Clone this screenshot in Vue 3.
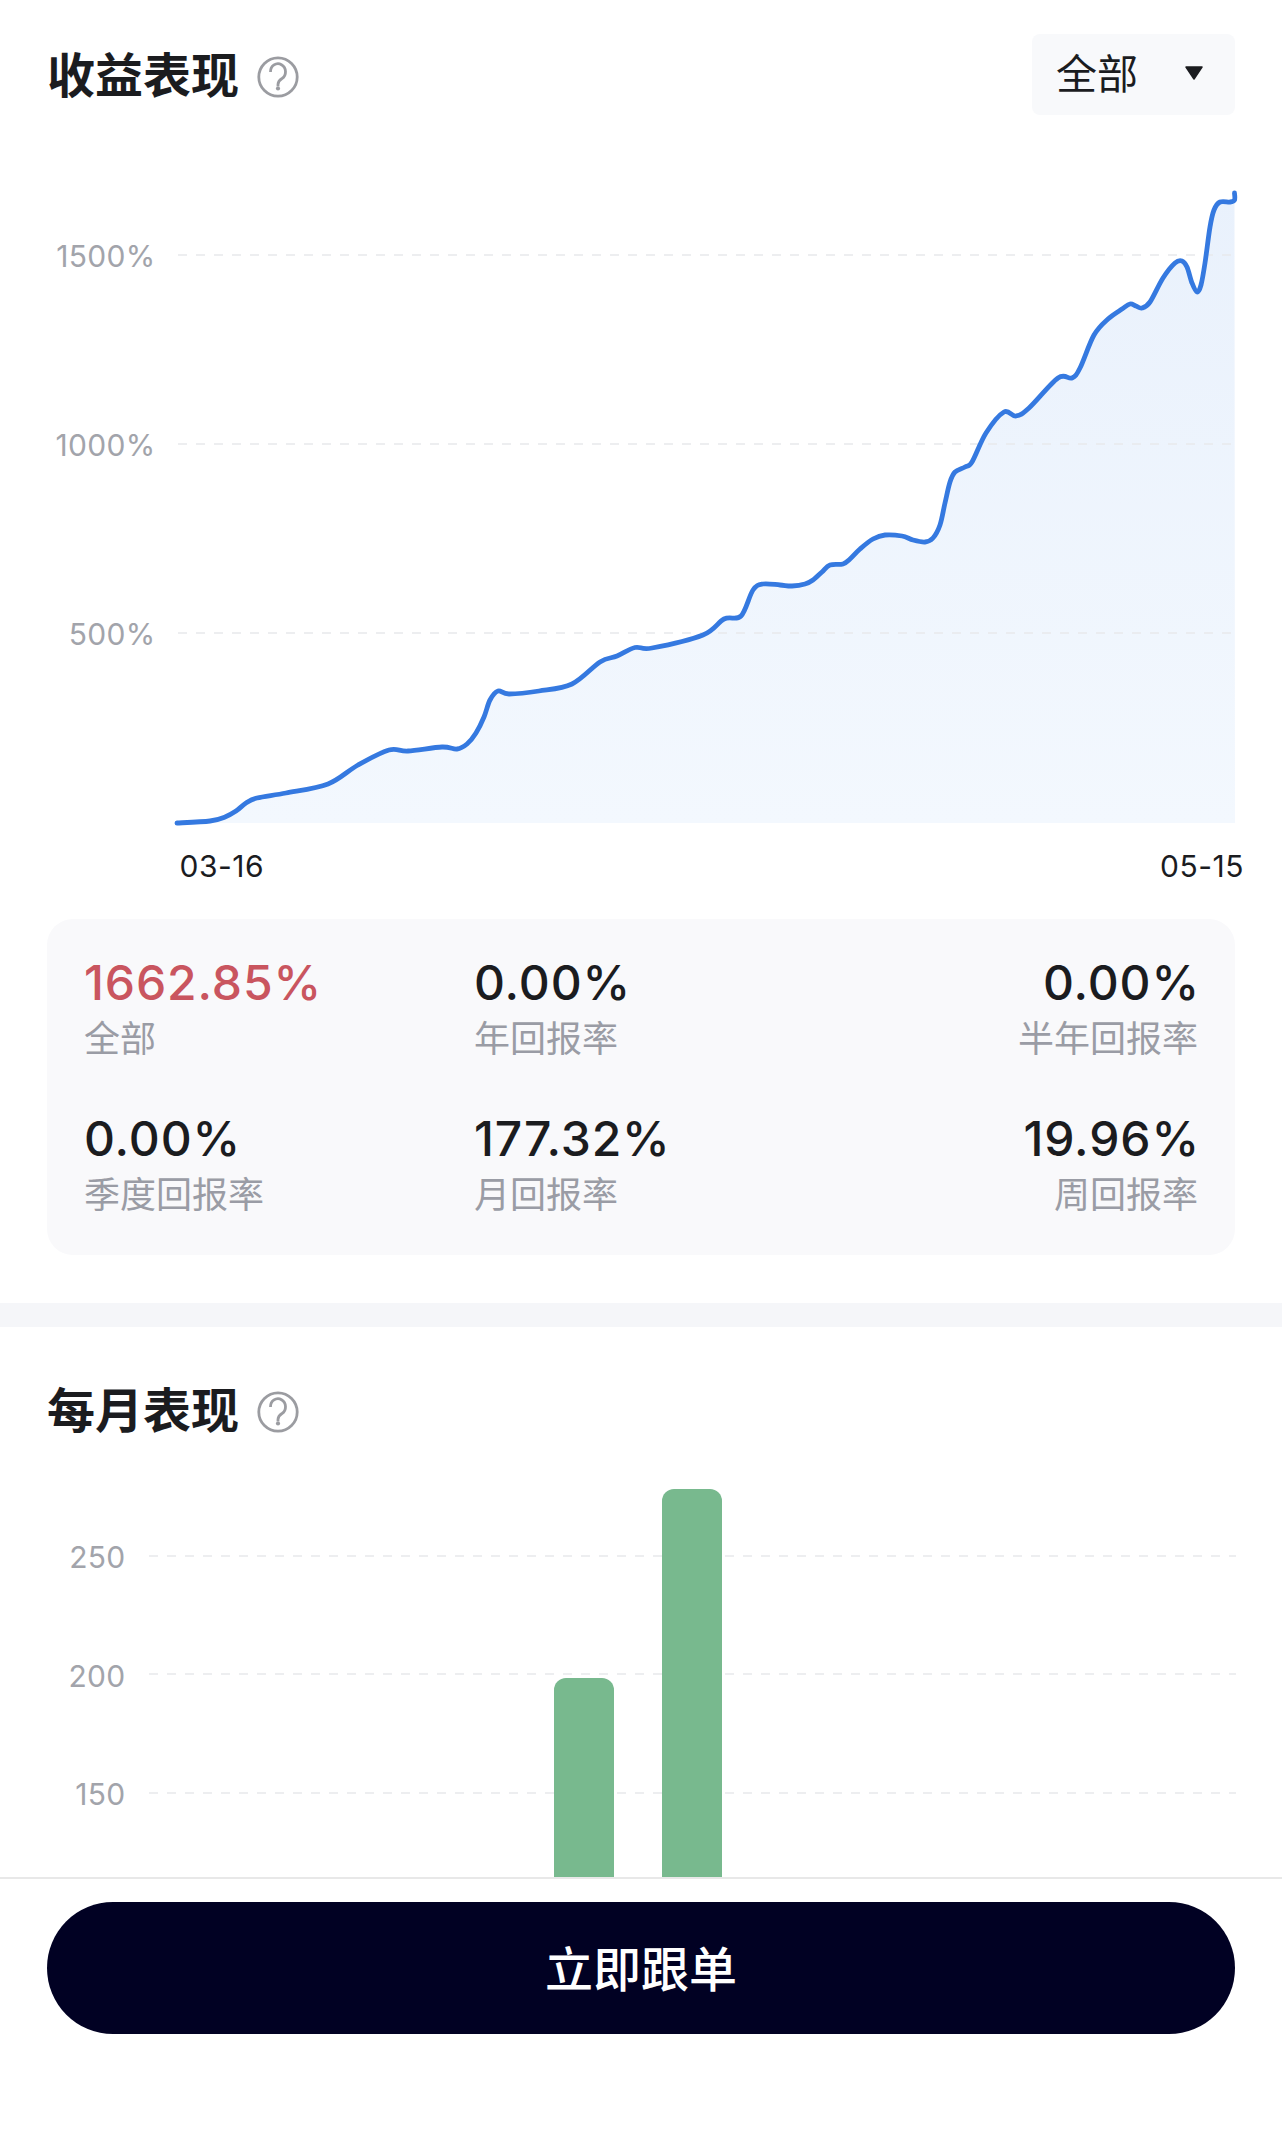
<script setup>
import { computed } from 'vue'

const stats = [
  { value: '1662.85%', label: '全部', red: true },
  { value: '0.00%', label: '年回报率' },
  { value: '0.00%', label: '半年回报率' },
  { value: '0.00%', label: '季度回报率' },
  { value: '177.32%', label: '月回报率' },
  { value: '19.96%', label: '周回报率' }
]

const profitGrid = [
  { y: 255, base: 267, label: '1500%' },
  { y: 444, base: 456, label: '1000%' },
  { y: 633, base: 645, label: '500%' }
]

const monthGrid = [
  { y: 1556, base: 1568, label: '250' },
  { y: 1674, base: 1687, label: '200' },
  { y: 1793, base: 1805, label: '150' }
]

// traced from the curve, page coordinates
const points = [
  [177, 823], [210, 821], [225, 817], [236, 811], [246, 803], [257, 798], [286, 793], [328, 784],
  [358, 765], [389, 750], [408, 751], [442, 747], [457, 749], [467, 744], [476, 733], [484, 717],
  [490, 700], [498, 691], [509, 694], [539, 691], [572, 684], [600, 662], [617, 656], [635, 647.5],
  [652, 648], [703, 635], [724, 619], [741, 616], [753, 590], [763, 584], [780, 585], [792, 586],
  [805, 584], [813, 580], [822, 572], [830, 565], [843, 564], [850, 559], [860, 549], [873, 539],
  [885, 535], [902, 536], [913, 540], [925, 542], [933, 538], [940, 525], [945, 503], [950, 482],
  [955, 472], [965, 467], [972, 462], [986, 433], [1004, 412], [1016, 416], [1029, 408], [1058, 378],
  [1072, 378], [1080, 368], [1094, 335], [1108, 319], [1122, 309], [1130, 304], [1136, 306], [1142, 308],
  [1150, 302], [1163, 278], [1175, 263],
  [1182, 261], [1187, 267], [1192, 283], [1197, 292], [1201, 285], [1205, 263], [1210, 227], [1214, 210],
  [1220, 202], [1230, 202], [1234.5, 200], [1234.5, 193]
]

const linePath = computed(() => {
  let d = `M${points[0][0]} ${points[0][1]}`
  for (let i = 0; i < points.length - 1; i++) {
    const p0 = points[i - 1] || points[i]
    const p1 = points[i]
    const p2 = points[i + 1]
    const p3 = points[i + 2] || p2
    const c1x = p1[0] + (p2[0] - p0[0]) / 6
    const c1y = p1[1] + (p2[1] - p0[1]) / 6
    const c2x = p2[0] - (p3[0] - p1[0]) / 6
    const c2y = p2[1] - (p3[1] - p1[1]) / 6
    d += ` C${c1x.toFixed(1)} ${c1y.toFixed(1)} ${c2x.toFixed(1)} ${c2y.toFixed(1)} ${p2[0]} ${p2[1]}`
  }
  return d
})

const areaPath = computed(() => `${linePath.value} L1235 823 L177 823 Z`)
</script>

<template>
  <div class="page">
    <div class="content">
      <section class="block">
        <div class="head">
          <div class="title-wrap">
            <h2 class="title">收益表现</h2>
            <svg class="help" viewBox="-21 -21 42 42">
              <circle r="19.2" />
              <path d="M-7.5 -5 a7.5 8 0 1 1 11.5 6.5 q-4 2.5 -4 6 v2" />
              <circle class="dot" cy="11.5" r="2.1" />
            </svg>
          </div>
          <div class="select">
            <span>全部</span>
            <svg class="caret" viewBox="0 0 20 16"><path d="M2 2 H18 L10 14 Z" /></svg>
          </div>
        </div>
      </section>

      <svg class="chart profit" viewBox="0 115 1282 804">
        <defs>
          <linearGradient id="areaFill" gradientUnits="userSpaceOnUse" x1="0" y1="190" x2="0" y2="823">
            <stop offset="0" stop-color="#e9f1fc" />
            <stop offset="1" stop-color="#f3f8fe" />
          </linearGradient>
        </defs>
        <path :d="areaPath" fill="url(#areaFill)" />
        <g v-for="g in profitGrid" :key="g.label">
          <line class="grid" x1="178" x2="1234" :y1="g.y" :y2="g.y" />
          <text class="axis" x="155.5" :y="g.base" text-anchor="end">{{ g.label }}</text>
        </g>
        <path class="curve" :d="linePath" />
        <text class="tick" x="179.5" y="877">03-16</text>
        <text class="tick" x="1244" y="877" text-anchor="end">05-15</text>
      </svg>

      <div class="stats">
        <div v-for="(s, i) in stats" :key="i" class="stat" :class="{ right: i % 3 === 2 }">
          <div class="val" :class="{ red: s.red }">{{ s.value }}</div>
          <div class="lab">{{ s.label }}</div>
        </div>
      </div>

      <div class="divider"></div>

      <section class="block second">
        <div class="head">
          <div class="title-wrap">
            <h2 class="title">每月表现</h2>
            <svg class="help" viewBox="-21 -21 42 42">
              <circle r="19.2" />
              <path d="M-7.5 -5 a7.5 8 0 1 1 11.5 6.5 q-4 2.5 -4 6 v2" />
              <circle class="dot" cy="11.5" r="2.1" />
            </svg>
          </div>
        </div>
      </section>

      <svg class="chart month" viewBox="0 1450 1282 500">
        <g v-for="g in monthGrid" :key="g.label">
          <line class="grid" x1="149" x2="1236" :y1="g.y" :y2="g.y" />
          <text class="axis" x="125.5" :y="g.base" text-anchor="end">{{ g.label }}</text>
        </g>
        <rect class="bar" x="554" y="1678" width="60" height="300" rx="12" />
        <rect class="bar" x="662" y="1489" width="60" height="500" rx="12" />
      </svg>
    </div>

    <div class="footer">
      <button class="follow">立即跟单</button>
    </div>
  </div>
</template>

<style scoped>
.page {
  width: 1282px;
  height: 2134px;
  display: flex;
  flex-direction: column;
  overflow: hidden;
  background: #fff;
  font-family: Inter, "Noto Sans CJK SC", sans-serif;
  color: #1b1c1f;
}

.content {
  height: 1877px;
  overflow: hidden;
}

.block {
  padding: 34px 47px 0;
}

.block.second {
  padding-top: 42px;
}

.head {
  height: 81px;
  display: flex;
  justify-content: space-between;
  align-items: center;
}

.title-wrap {
  display: flex;
  align-items: center;
  gap: 20px;
}

.title {
  margin: -5px 0 0;
  font-family: "Noto Sans CJK SC", sans-serif;
  font-size: 48px;
  line-height: 60px;
  font-weight: 700;
}

.help {
  width: 42px;
  height: 42px;
  margin-top: 5px;
  margin-left: -2px;
  fill: none;
  stroke: #9b9ca1;
  stroke-width: 2.8;
}

.help .dot {
  fill: #9b9ca1;
  stroke: none;
}

.select {
  width: 203px;
  height: 81px;
  box-sizing: border-box;
  padding: 0 31px 4px 24px;
  display: flex;
  justify-content: space-between;
  align-items: center;
  background: #f8f9fb;
  border-radius: 8px;
  font-family: "Noto Sans CJK SC", sans-serif;
  font-size: 41px;
}

.select span {
  margin-top: -4px;
}

.caret {
  width: 20px;
  height: 16px;
  fill: #1b1c1f;
  stroke: #1b1c1f;
  stroke-width: 1.5;
  stroke-linejoin: round;
}

.chart {
  display: block;
  width: 1282px;
}

.profit {
  height: 804px;
}

.month {
  height: 500px;
}

.grid {
  stroke: #e8e9ec;
  stroke-width: 1.5;
  stroke-dasharray: 9 9;
}

.axis {
  font-size: 30px;
  letter-spacing: 0.3px;
  fill: #a2a4ab;
}

.tick {
  font-size: 30px;
  letter-spacing: 0.5px;
  fill: #1b1c1f;
}

.curve {
  fill: none;
  stroke: #3579e0;
  stroke-width: 4.8;
  stroke-linecap: round;
  stroke-linejoin: round;
}

.bar {
  fill: #78b98e;
}

.stats {
  margin: 0 47px;
  height: 336px;
  box-sizing: border-box;
  padding: 40px 37px 0;
  display: grid;
  grid-template-columns: 390px 1fr 1fr;
  grid-auto-rows: 104px;
  row-gap: 52px;
  background: #f9f9fb;
  border-radius: 26px;
}

.stat.right {
  text-align: right;
}

.stat.right .val {
  margin-right: -2px;
}

.val {
  font-size: 48px;
  font-weight: 500;
  line-height: 48px;
  letter-spacing: 0.9px;
}

.val.red {
  color: #c9555f;
}

.lab {
  margin-top: 5px;
  font-family: "Noto Sans CJK SC", sans-serif;
  font-size: 36px;
  line-height: 48px;
  color: #9a9ca5;
}

.divider {
  margin-top: 48px;
  height: 24px;
  background: #f5f6f9;
}

.footer {
  flex: 1;
  box-sizing: border-box;
  padding: 23px 47px 0;
  background: #fff;
  border-top: 2px solid #e8e8e8;
}

.follow {
  display: block;
  width: 100%;
  height: 132px;
  padding: 0 0 5px;
  border: none;
  border-radius: 66px;
  background: #010123;
  color: #fff;
  font-family: "Noto Sans CJK SC", sans-serif;
  font-size: 48px;
  font-weight: 500;
}
</style>
